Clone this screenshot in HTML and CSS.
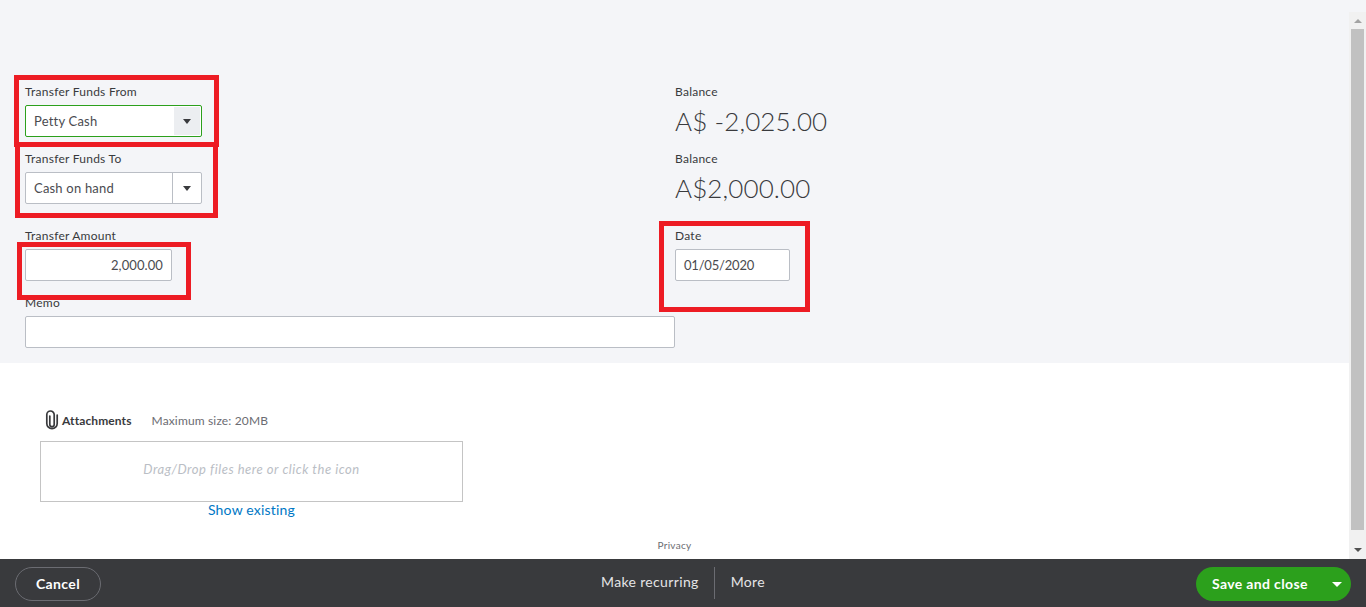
FILE: index.html
```html
<!DOCTYPE html>
<html lang="en">
<head>
<meta charset="utf-8">
<title>Transfer</title>
<link rel="stylesheet" href="styles.css">
</head>
<body>
<div class="page">
  <div class="scrollarea">
    <main class="content">
      <section class="form">
        <div class="field field-from">
          <label class="label">Transfer Funds From</label>
          <div class="combo combo-active"><span class="combo-value">Petty Cash</span><span class="combo-btn combo-btn-active"><i class="caret"></i></span></div>
        </div>
        <div class="field">
          <label class="label">Balance</label>
          <div class="balance">A$ -2,025.00</div>
        </div>
        <div class="field">
          <label class="label">Transfer Funds To</label>
          <div class="combo"><span class="combo-value">Cash on hand</span><span class="combo-btn"><i class="caret"></i></span></div>
        </div>
        <div class="field">
          <label class="label">Balance</label>
          <div class="balance">A$2,000.00</div>
        </div>
        <div class="field field-low">
          <label class="label">Transfer Amount</label>
          <div class="input input-amount">2,000.00</div>
        </div>
        <div class="field field-low">
          <label class="label">Date</label>
          <div class="input input-date">01/05/2020</div>
        </div>
        <div class="field field-memo">
          <label class="label">Memo</label>
          <div class="input input-memo"></div>
        </div>
      </section>
      <section class="attach">
        <div class="attach-head">
          <svg class="clip" width="14" height="20" viewBox="0 0 14 20" fill="none" stroke="#393a3d" stroke-width="1.7" stroke-linecap="round"><path d="M4.8 6v8.5a2.2 2.2 0 0 0 4.4 0V4.7a3.7 3.7 0 0 0-7.4 0v8.8a5.2 5.2 0 0 0 10.4 0V5"/></svg>
          <span class="attach-title">Attachments</span>
          <span class="attach-size">Maximum size: 20MB</span>
        </div>
        <div class="drop">Drag/Drop files here or click the icon</div>
        <a class="show-existing">Show existing</a>
        <div class="privacy">Privacy</div>
      </section>
    </main>
    <div class="scrollbar">
      <span class="sb-arrow sb-up"></span>
      <span class="sb-thumb"></span>
      <span class="sb-arrow sb-down"></span>
    </div>
  </div>
  <footer class="footer">
    <button class="btn-cancel">Cancel</button>
    <div class="footer-mid">
      <span class="footer-link link-recurring">Make recurring</span>
      <span class="footer-link link-more">More</span>
    </div>
    <div class="btn-save"><span class="save-text">Save and close</span><i class="save-caret"></i></div>
  </footer>
  <div class="mark mark-from"></div>
  <div class="mark mark-to"></div>
  <div class="mark mark-amount"></div>
  <div class="mark mark-date"></div>
</div>
</body>
</html>
```
FILE: styles.css
```css
* { box-sizing: border-box; }
html, body { margin: 0; height: 100%; overflow: hidden; }
body { font-family: Lato, "Open Sans", "Liberation Sans", sans-serif; color: #393a3d; background: #fff; }
.page { position: relative; width: 1366px; height: 607px; display: flex; flex-direction: column; }
.scrollarea { display: flex; height: 559px; }
.content { width: 1349px; display: flex; flex-direction: column; }
.form { height: 363px; background: #f4f5f8; padding: 81px 0 0 25px; display: grid; grid-template-columns: 650px 300px; grid-auto-rows: min-content; align-content: start; }
.field { height: 67px; }
.field-low { height: 67px; margin-top: 10px; }
.field-memo { grid-column: 1 / 3; }
.label { display: block; height: 24px; font-size: 12px; line-height: 21px; letter-spacing: .25px; color: #393a3d; }
.combo { width: 177px; height: 32px; display: flex; background: #fff; border: 1px solid #babec5; border-radius: 2px; font-size: 13px; letter-spacing: .2px; color: #4a4b50; }
.combo-active { border-color: #2ca01c; }
.combo-value { flex: 1; padding-left: 8px; line-height: 30px; }
.combo-btn { width: 29px; border-left: 1px solid #babec5; display: flex; align-items: center; justify-content: center; }
.combo-btn-active { border-left: 0; background: #eceef1; margin: 1px; width: 26px; }
.caret { width: 0; height: 0; border-left: 4.5px solid transparent; border-right: 4.5px solid transparent; border-top: 5px solid #393a3d; }
.balance { font-size: 26px; font-weight: 300; line-height: 34px; letter-spacing: .1px; color: #393a3d; margin-top: -1px; }
.input { height: 32px; background: #fff; border: 1px solid #babec5; border-radius: 2px; font-size: 13px; line-height: 30px; padding: 0 8px; color: #4a4b50; }
.input-amount { width: 147px; text-align: right; letter-spacing: .1px; }
.input-date { width: 115px; letter-spacing: -.2px; }
.input-memo { width: 650px; }
.attach { flex: 1; position: relative; padding: 46px 0 0 40px; }
.attach-head { display: flex; align-items: center; height: 22px; padding-left: 5px; font-size: 12px; letter-spacing: .15px; }
.clip { flex: none; margin-right: 3px; }
.attach-title { color: #393a3d; font-weight: 700; letter-spacing: .1px; }
.attach-size { color: #6b6c72; margin-left: 20px; }
.drop { width: 423px; height: 61px; margin-top: 10px; padding-bottom: 5px; border: 1px solid #c4c4c4; display: flex; align-items: center; justify-content: center; font-size: 13px; letter-spacing: .52px; font-style: italic; color: #babec5; }
.show-existing { display: block; width: 423px; text-align: center; font-size: 14px; letter-spacing: .2px; line-height: 16px; color: #0077c5; }
.privacy { position: absolute; left: 0; width: 1349px; top: 176px; text-align: center; font-size: 10px; letter-spacing: .3px; color: #6b6c72; }
.scrollbar { width: 17px; height: 559px; background: linear-gradient(#f4f5f8 12px, #f1f1f1 12px); display: flex; flex-direction: column; align-items: center; padding-top: 12px; }
.sb-arrow { width: 0; height: 0; border-left: 4px solid transparent; border-right: 4px solid transparent; }
.sb-up { border-bottom: 4px solid #a3a3a3; margin-top: 7px; }
.sb-down { border-top: 4px solid #505050; margin-top: 18px; }
.sb-thumb { width: 13px; height: 501px; background: #c1c1c1; margin-top: 6px; }
.footer { height: 48px; background: #393a3d; display: flex; align-items: center; position: relative; padding: 2px 15px 0; }
.btn-cancel { width: 86px; height: 34px; border: 1px solid #6b6c72; border-radius: 17px; background: transparent; color: #fff; font-family: inherit; font-weight: 700; font-size: 14px; letter-spacing: .4px; padding: 0 0 1px; }
.footer-mid { position: absolute; left: 601px; top: 8px; height: 32px; display: flex; align-items: center; }
.footer-link { color: #e4e4e6; font-size: 14px; line-height: 30px; height: 32px; letter-spacing: .35px; }
.link-recurring { padding-right: 15px; border-right: 1px solid #6b6c72; }
.link-more { padding-left: 16px; }
.btn-save { position: absolute; left: 1196px; top: 8px; width: 155px; height: 34px; border-radius: 17px; background: #2ca01c; color: #fff; display: flex; align-items: center; padding: 0 0 1px 16px; }
.save-text { font-size: 14px; font-weight: 700; flex: 1; letter-spacing: .35px; }
.save-caret { width: 0; height: 0; margin: 2px 9px 0 0; border-left: 5px solid transparent; border-right: 5px solid transparent; border-top: 5px solid #fff; }
.mark { position: absolute; border: 5px solid #ed1c24; }
.mark-from { left: 14px; top: 75px; width: 205px; height: 72px; }
.mark-to { left: 15px; top: 142px; width: 203px; height: 76px; }
.mark-amount { left: 17px; top: 242px; width: 174px; height: 58px; }
.mark-date { left: 659px; top: 221px; width: 151px; height: 91px; }
```
